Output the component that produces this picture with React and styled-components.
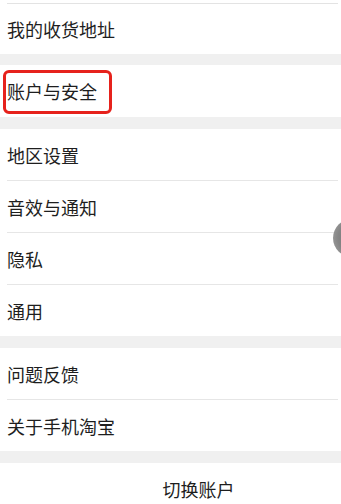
import React from 'react';
import styled, { createGlobalStyle } from 'styled-components';

const Global = createGlobalStyle`
  html, body {
    margin: 0;
    padding: 0;
    background: #ffffff;
    overflow: hidden;
  }
  body {
    font-family: "Noto Sans CJK SC", "Noto Sans", sans-serif;
  }
`;

const Page = styled.div`
  position: relative;
  width: 341px;
  height: 504px;
  overflow: hidden;
  background: #f0f0f0;
`;

const TopCut = styled.div`
  height: 3px;
  background: #fff;
`;

const Group = styled.div`
  background: #fff;
  margin-bottom: ${(p) => p.$gap || 12}px;
`;

const Row = styled.div`
  position: relative;
  display: flex;
  align-items: center;
  height: ${(p) => p.$h || 51}px;
  padding-left: 7px;
  font-size: 18px;
  color: #1e1e1e;
  letter-spacing: 0px;
  & + & {
    border-top: 1px solid #e6e6e6;
    margin-left: 7px;
    padding-left: 0;
    margin-right: 3px;
  }
`;

const Divider = styled.div`
  height: 1px;
  margin: 0 3px 0 7px;
  background: #e3e3e3;
`;

const Highlight = styled.div`
  position: absolute;
  left: 3px;
  top: 5px;
  width: 103px;
  height: 38px;
  border: 3px solid #e6221c;
  border-radius: 6px;
`;

const SwitchRow = styled.div`
  display: flex;
  align-items: center;
  justify-content: center;
  height: 52px;
  padding-left: 56px;
  background: #fff;
  font-size: 18px;
  color: #1e1e1e;
`;

const FloatBall = styled.div`
  position: absolute;
  left: 333px;
  top: 219px;
  width: 38px;
  height: 38px;
  border-radius: 50%;
  background: radial-gradient(circle at 60% 50%, #6f6f6f 0%, #858585 60%, #a8a8a8 100%);
`;

export default function App() {
  return (
    <Page>
      <Global />
      <TopCut />
      <Group $gap={11}>
        <Divider />
        <Row $h={50}>我的收货地址</Row>
      </Group>
      <Group>
        <Row $h={52}>
          账户与安全
          <Highlight />
        </Row>
      </Group>
      <Group>
        <Row>地区设置</Row>
        <Row>音效与通知</Row>
        <Row>隐私</Row>
        <Row>通用</Row>
      </Group>
      <Group>
        <Row>问题反馈</Row>
        <Row>关于手机淘宝</Row>
      </Group>
      <SwitchRow>切换账户</SwitchRow>
      <FloatBall />
    </Page>
  );
}
